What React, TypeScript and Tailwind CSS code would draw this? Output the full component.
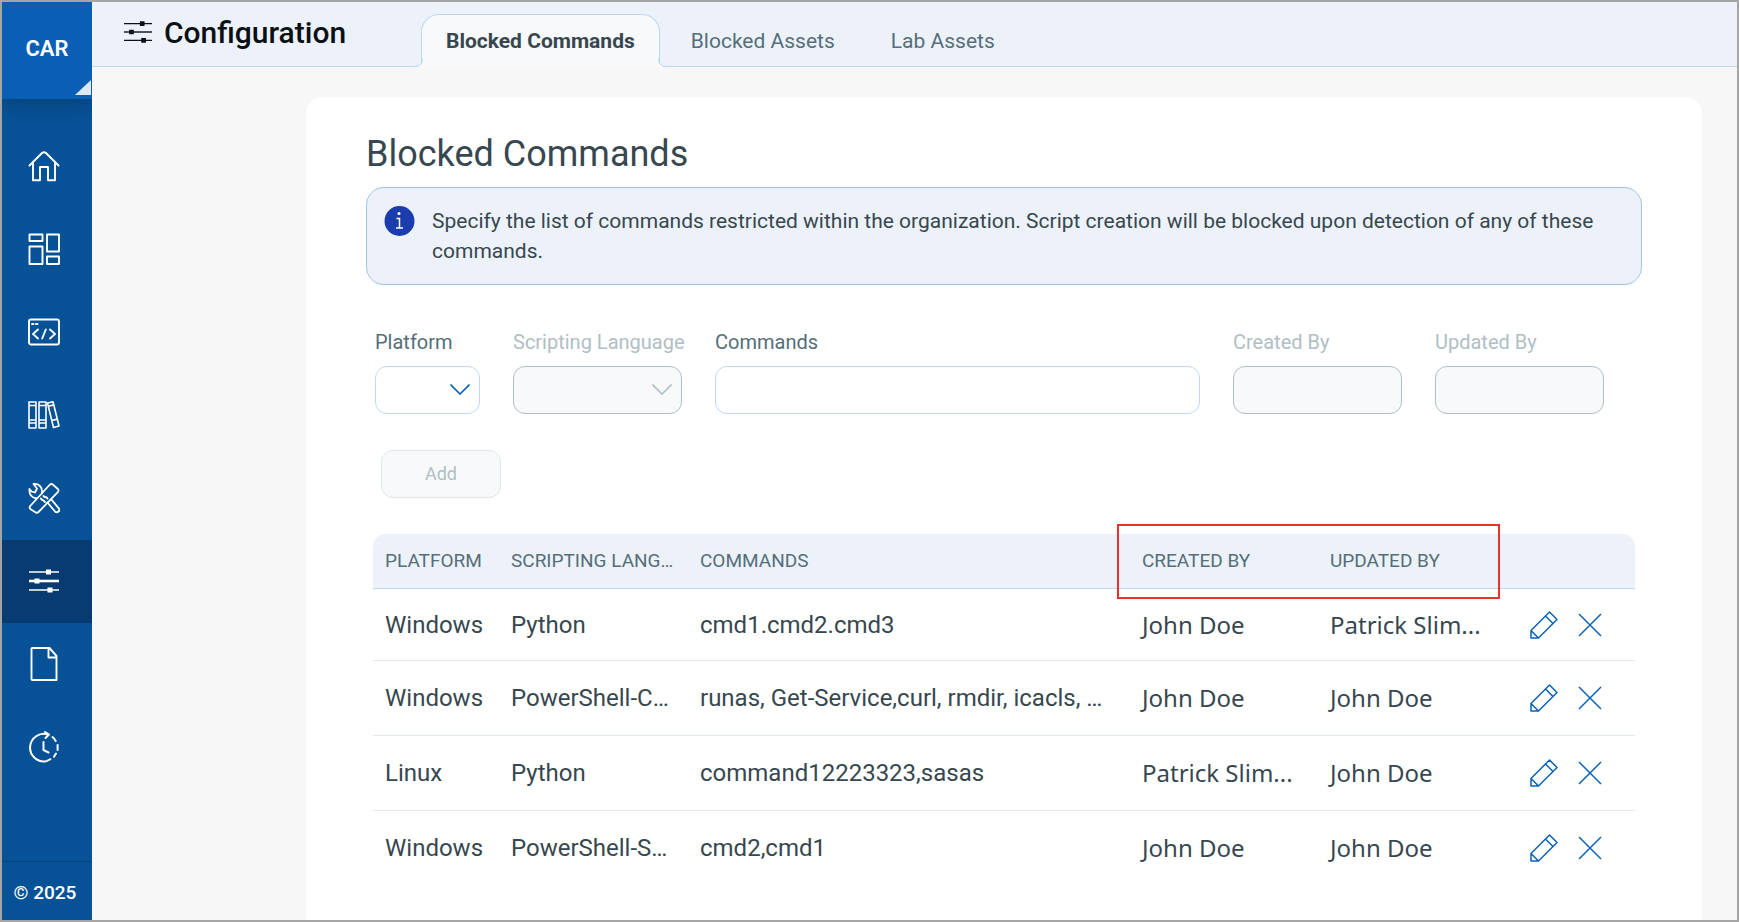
import type { ReactNode } from "react";

function Sliders({ className, bold }: { className: string; bold?: boolean }) {
  return (
    <svg className={className} viewBox="0 0 30 24" fill="none" stroke="currentColor" strokeWidth="1.5" aria-hidden="true">
      <path d="M0 3h30M0 21h30" />
      <path d="M0 12h30" strokeWidth={bold ? 2.6 : 1.5} />
      <path d="M17 3h5M5.500 12h5M18.500 21h5" strokeWidth="5" />
    </svg>
  );
}

const iconProps = {
  className: "size-8",
  viewBox: "0 0 32 32",
  fill: "none",
  stroke: "currentColor",
  strokeWidth: 1.9,
  strokeLinejoin: "round" as const,
  strokeLinecap: "round" as const,
  "aria-hidden": true,
};

const navItems: { label: string; active?: boolean; icon: ReactNode }[] = [
  {
    label: "Home",
    icon: (
      <svg {...iconProps}>
        <path d="M1.500 15.500 14 3q2-1.600 4 0L30.500 15.500M5 13v17.200h7V17h8v13.200h7V13" />
      </svg>
    ),
  },
  {
    label: "Dashboards",
    icon: (
      <svg {...iconProps}>
        <path d="M1.500 1.500h13v6.500h-13zM1.500 13.500h13V31h-13zM19 1.500h12V18.500H19zM19 23.500h12V31H19z" />
      </svg>
    ),
  },
  {
    label: "Scripts",
    icon: (
      <svg {...iconProps}>
        <rect x="1" y="3.500" width="30" height="25" rx="2" />
        <path d="M10 13.500 5 18l5 4.500M22 13.500l5 4.500-5 4.500M17.800 13.500l-3.600 9" />
        <path d="M4 8h8" strokeDasharray="1.500 2.500" />
      </svg>
    ),
  },
  {
    label: "Library",
    icon: (
      <svg {...iconProps} strokeWidth={1.6}>
        <path d="M1 3h7v26H1zM11 3h7v26h-7zM1 6.500h7M1 21h7M1 24h7M11 6.500h7M11 21h7M11 24h7" />
        <path d="m19.500 4 5.500-1.300 6 24.300-5.500 1.500zM20.300 7.300l5.500-1.400M23.800 21.500l5.600-1.400" />
      </svg>
    ),
  },
  {
    label: "Tools",
    icon: (
      <svg {...iconProps} strokeWidth={1.8}>
        <path d="M2.200 24 21.500 3q1.700-1.800 3.500-.3l4.600 4q1.700 1.700.2 3.400L10.500 30q-1.700 1.500-3.500 0l-4.700-3q-1.300-1.500-.1-3z" />
        <path d="M14 11.500q.5-5-2-7.500t-6.500-2l3.500 4.500-2 4L3.500 9.500 1.500 7q-.5 4 1.500 6.500t5.500 3M19.500 20.500l7.500 9q1.500 1.500 3.300.2t.5-3.400l-7.500-9" />
        <path d="M15.500 14l1 1M12.800 16.500l1.500 1.500M18 15l1.500 1.500M15.500 18.500l1.500 1.500" />
      </svg>
    ),
  },
  { label: "Configuration", active: true, icon: <Sliders className="h-6 w-[30px]" bold /> },
  {
    label: "Reports",
    icon: (
      <svg {...iconProps} className="h-[34px] w-8" viewBox="0 0 32 34">
        <path d="M4.500 1h17l7 8v24h-24q-1 0-1-1V2q0-1 1-1zM20.500 1.500V10.500h8" />
      </svg>
    ),
  },
  {
    label: "History",
    icon: (
      <svg {...iconProps} strokeWidth={2}>
        <path d="M20 3.500a13.800 13.800 0 1 0-2 26.800" />
        <path d="M17 1l4 2.500-3.500 3.500M15.500 11v8l5 2.500" />
        <path d="M24.500 6q2 1.500 3.200 4M29.600 14v5M28 22.500l-2 3.200M22.500 28.200l-3 1.500" />
      </svg>
    ),
  },
];

const rows = [
  ["Windows", "Python", "cmd1.cmd2.cmd3", "John Doe", "Patrick Slim..."],
  ["Windows", "PowerShell-C…", "runas, Get-Service,curl, rmdir, icacls, …", "John Doe", "John Doe"],
  ["Linux", "Python", "command12223323,sasas", "Patrick Slim...", "John Doe"],
  ["Windows", "PowerShell-S…", "cmd2,cmd1", "John Doe", "John Doe"],
];

function Chevron({ className }: { className: string }) {
  return (
    <svg className={className} viewBox="0 0 20 11" fill="none" stroke="currentColor" strokeWidth="1.600" aria-hidden="true">
      <path d="M.5.500 10 10 19.500.500" />
    </svg>
  );
}

function Field({ id, label, disabled, select }: { id: string; label: string; disabled?: boolean; select?: boolean }) {
  const box = disabled ? "border-[#b0bec5] bg-[#f7f9fb]" : "border-[#c0d9ef] bg-white";
  return (
    <div className="min-w-0">
      <label htmlFor={id} className={`block whitespace-nowrap text-xl leading-6 ${disabled ? "text-[#b0bec5]" : "text-[#546e7a]"}`}>
        {label}
      </label>
      <div className="relative mt-3">
        {select ? (
          <>
            <select id={id} disabled={disabled} className={`h-12 w-full appearance-none rounded-xl border px-3 opacity-100 ${box}`} />
            <Chevron className={`pointer-events-none absolute top-[18px] right-[10px] h-[11px] w-5 ${disabled ? "text-[#b0bec5]" : "text-[#0a62b8]"}`} />
          </>
        ) : (
          <input id={id} type="text" disabled={disabled} className={`block h-12 w-full rounded-xl border px-3 ${box}`} />
        )}
      </div>
    </div>
  );
}

export default function App() {
  return (
    <div className="flex min-h-screen border-2 border-[#a5a5a5] bg-[#f7f7f7] font-['Roboto',sans-serif] text-[#37474f]">
      <aside className="flex w-[90px] shrink-0 flex-col overflow-hidden bg-[#075196] text-white">
        <button type="button" className="relative h-[97px] bg-[#0a5fb5] pb-1 text-[22px] font-semibold shadow-[0_6px_18px_rgba(0,0,0,0.18)]">
          CAR
          <svg className="absolute right-px bottom-1 h-[15px] w-4" viewBox="0 0 16 15" aria-hidden="true">
            <path d="M16 0v15H0z" fill="#dbe8f6" />
          </svg>
        </button>
        <nav className="mt-[26px] flex flex-col">
          {navItems.map((item) => (
            <a
              key={item.label}
              href="#"
              aria-label={item.label}
              className={`flex h-[83px] items-center justify-center pr-[6px] pb-[2px] ${item.active ? "bg-[#073b72]" : ""}`}
            >
              {item.icon}
            </a>
          ))}
        </nav>
        <div className="mt-auto flex h-[59px] items-center justify-center border-t border-[#06407a] pt-1 pr-1 text-[19px] font-medium">© 2025</div>
      </aside>

      <div className="flex min-w-0 flex-1 flex-col">
        <header className="flex h-[65px] shrink-0 border-b border-[#bdd8ee] bg-[#edf2fa]">
          <div className="flex h-[60px] w-[329px] shrink-0 items-center gap-3 pl-8 text-[#0b1014]">
            <Sliders className="h-6 w-7" />
            <h1 className="text-[30px] font-medium">Configuration</h1>
          </div>
          <nav className="flex text-[21px] leading-6 text-[#546e7a]">
            <a
              href="#"
              aria-current="page"
              className="relative mt-3 -mb-px h-[53px] rounded-t-[18px] border border-b-0 border-[#bdd8ee] bg-[#f7f9fb] px-6 pt-[14px] font-bold text-[#37474f]"
            >
              Blocked Commands
              <svg className="absolute bottom-0 -left-2 h-2 w-[9px]" viewBox="0 0 9 8" aria-hidden="true">
                <path d="M0 8Q8.500 8 8.500 0H9v8z" fill="#f7f9fb" />
                <path d="M0 7.500Q8.500 7.500 8.500 0" fill="none" stroke="#bdd8ee" />
              </svg>
              <svg className="absolute -right-2 bottom-0 h-2 w-[9px]" viewBox="0 0 9 8" aria-hidden="true">
                <path d="M9 8Q.500 8 .500 0H0v8z" fill="#f7f9fb" />
                <path d="M9 7.500Q.500 7.500 .500 0" fill="none" stroke="#bdd8ee" />
              </svg>
            </a>
            <a href="#" className="mt-[27px] ml-[31px]">Blocked Assets</a>
            <a href="#" className="mt-[27px] ml-14">Lab Assets</a>
          </nav>
        </header>

        <main className="mt-[30px] mr-[35px] ml-[214px] flex-1 rounded-t-2xl bg-white px-[60px] pt-9">
          <h2 className="text-4xl leading-[42px]">Blocked Commands</h2>
          <section className="mt-3 flex gap-[17px] rounded-[18px] border border-[#a0c3e6] bg-[#edf2fa] px-[17px] py-[18px]">
            <svg className="size-[31px] shrink-0" viewBox="0 0 31 31" aria-hidden="true">
              <circle cx="15.500" cy="15" r="15" fill="#1a3cad" />
              <circle cx="15" cy="7.500" r="1.500" fill="#fff" />
              <path d="M12.500 12.500h3V22M12 22h7" fill="none" stroke="#fff" strokeWidth="1.500" />
            </svg>
            <p className="text-[21px] leading-[30px]">
              Specify the list of commands restricted within the organization. Script creation will be blocked upon detection of any of these commands.
            </p>
          </section>

          <form className="mt-[45px] px-[9px]" onSubmit={(e) => e.preventDefault()}>
            <div className="grid grid-cols-[105px_169px_minmax(0,1fr)_169px_169px] gap-[33px] pr-[29px]">
              <Field id="platform" label="Platform" select />
              <Field id="language" label="Scripting Language" select disabled />
              <Field id="commands" label="Commands" />
              <Field id="created" label="Created By" disabled />
              <Field id="updated" label="Updated By" disabled />
            </div>
            <button type="submit" disabled className="mt-9 ml-[6px] block h-12 w-[120px] rounded-xl border border-[#e0e6ea] bg-[#f7f9fb] text-lg text-[#b0bec5]">
              Add
            </button>
          </form>

          <div className="relative mt-9 mr-[7px] ml-[7px]">
            <table className="w-full table-fixed border-separate border-spacing-0 text-left">
              <colgroup>
                <col className="w-[126px]" />
                <col className="w-[189px]" />
                <col />
                <col className="w-[188px]" />
                <col className="w-[187px]" />
                <col className="w-[130px]" />
              </colgroup>
              <thead>
                <tr className="h-[55px] text-[19px] text-[#546e7a] [&>th]:border-b [&>th]:border-[#bdd8ee] [&>th]:bg-[#edf2fa] [&>th]:whitespace-nowrap [&>th]:px-3 [&>th]:font-normal">
                  <th className="rounded-tl-xl">PLATFORM</th>
                  <th>SCRIPTING LANG…</th>
                  <th>COMMANDS</th>
                  <th>CREATED BY</th>
                  <th>UPDATED BY</th>
                  <th className="rounded-tr-xl" aria-label="Actions" />
                </tr>
              </thead>
              <tbody>
                {rows.map((row, i) => (
                  <tr
                    key={i}
                    className="h-[75px] text-2xl first:h-[72px] [&>td]:border-b [&>td]:border-[#e3eaee] last:[&>td]:border-transparent"
                  >
                    {row.map((cell, j) => (
                      <td key={j} className={j > 2 ? "whitespace-nowrap pl-3 font-['Noto_Sans',sans-serif]" : "whitespace-nowrap pl-3"}>
                        {cell}
                      </td>
                    ))}
                    <td className="pl-[25px]">
                      <div className="flex items-center gap-5 text-[#0a62b8]">
                        <button type="button" aria-label="Edit">
                          <svg className="size-7" viewBox="0 0 28 28" fill="none" stroke="currentColor" strokeWidth="1.500" strokeLinejoin="round" aria-hidden="true">
                            <path d="M1 27v-7.500L19.500 1 27 8.500 8.500 27zM1 19.500 8.500 27M15.500 5l7.500 7.500" />
                          </svg>
                        </button>
                        <button type="button" aria-label="Delete">
                          <svg className="size-6" viewBox="0 0 24 24" fill="none" stroke="currentColor" strokeWidth="1.500" aria-hidden="true">
                            <path d="m1 1 22 22M23 1 1 23" />
                          </svg>
                        </button>
                      </div>
                    </td>
                  </tr>
                ))}
              </tbody>
            </table>
            <div className="pointer-events-none absolute -top-[10px] right-[135px] h-[75px] w-[383px] border-2 border-[#ee302b]" />
          </div>
        </main>
      </div>
    </div>
  );
}
